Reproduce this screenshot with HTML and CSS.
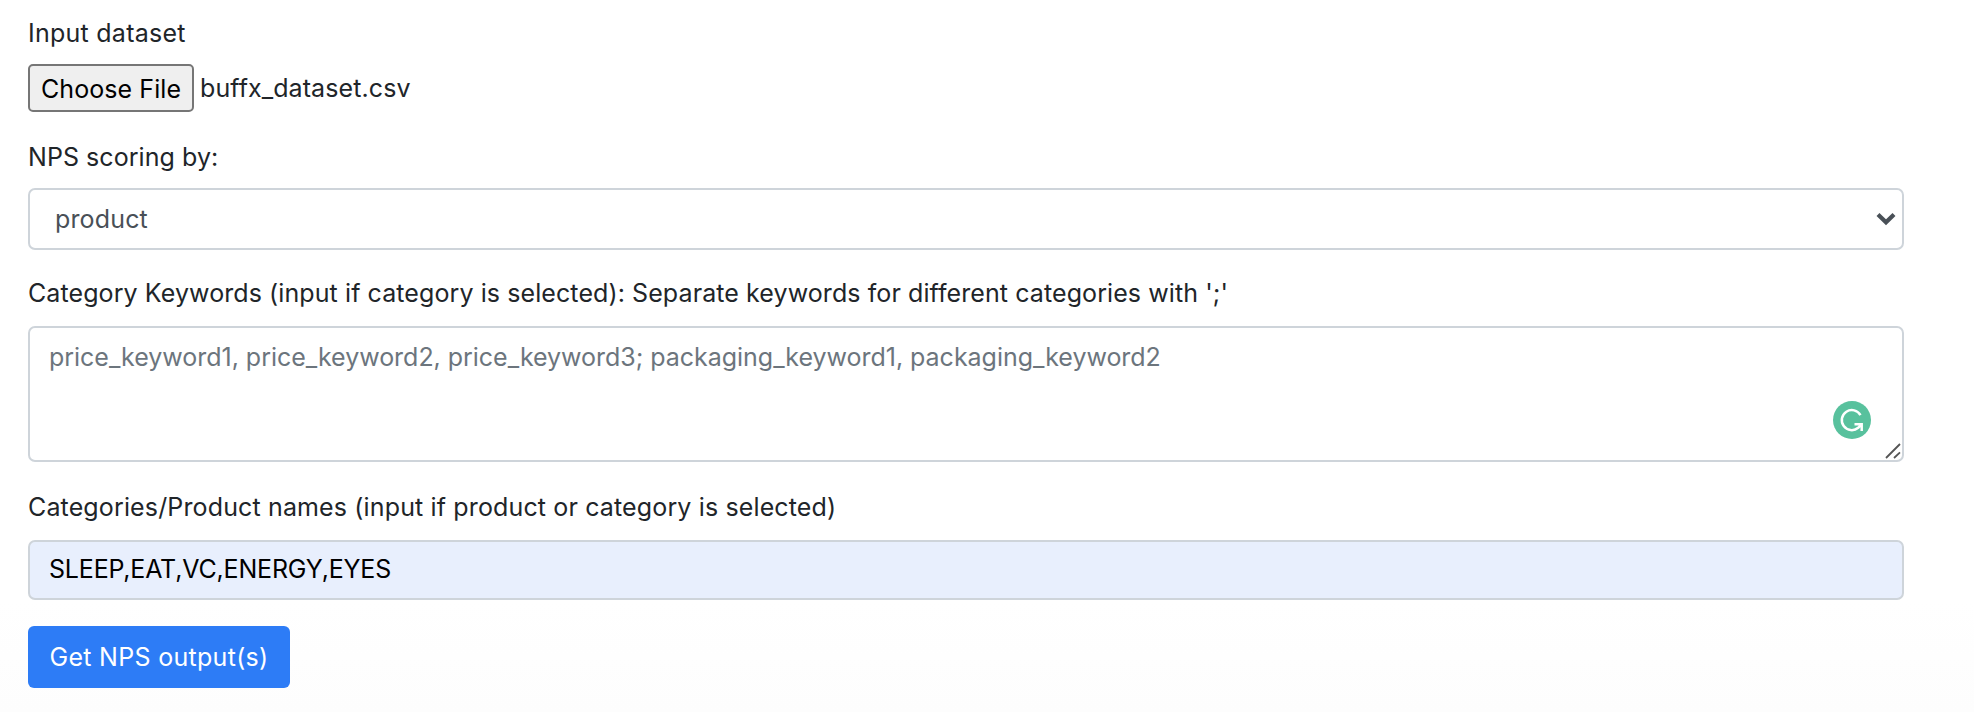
FILE: index.html
```html
<!DOCTYPE html>
<html lang="en">
<head>
<meta charset="utf-8">
<title>NPS scoring</title>
<link rel="stylesheet" href="styles.css">
</head>
<body>
<form class="form">
  <div class="group group-file">
    <label class="label label-dataset">Input dataset</label>
    <div class="file">
      <button type="button" class="file-button">Choose File</button>
      <span class="file-name">buffx_dataset.csv</span>
    </div>
  </div>
  <div class="group group-scoring">
    <label class="label label-scoring">NPS scoring by:</label>
    <div class="control select">
      <span class="select-value">product</span>
      <svg class="chevron" width="20" height="14" viewBox="0 0 20 14"><path d="M2 2.500 10 10.300 18 2.500" fill="none" stroke="#495057" stroke-width="4.200"/></svg>
    </div>
  </div>
  <div class="group group-keywords">
    <label class="label label-keywords">Category Keywords (input if category is selected): Separate keywords for different categories with ';'</label>
    <div class="control textarea">
      <span class="placeholder">price_keyword1, price_keyword2, price_keyword3; packaging_keyword1, packaging_keyword2</span>
      <svg class="badge" width="38" height="38" viewBox="0 0 38 38">
        <circle cx="19" cy="19" r="19" fill="#58c19d"/>
        <path d="M27.500 14.200A10 10 0 1 0 25.200 26.800L28.400 23.500M21.500 23.300H28.700V30" fill="none" stroke="#fff" stroke-width="2.500"/>
      </svg>
      <svg class="resizer" width="16" height="16" viewBox="0 0 16 16"><path d="M1 15 15 1M9 15 15 9.300" fill="none" stroke="#555" stroke-width="1.800"/></svg>
    </div>
  </div>
  <div class="group group-names">
    <label class="label label-names">Categories/Product names (input if product or category is selected)</label>
    <div class="control text-input"><span>SLEEP,EAT,VC,ENERGY,EYES</span></div>
  </div>
  <button type="button" class="submit">Get NPS output(s)</button>
</form>
</body>
</html>
```

FILE: styles.css
```css
* { box-sizing: border-box; }
body {
  margin: 0;
  min-height: 712px;
  background: linear-gradient(#fff 0, #fff 600px, #fdfdfd 712px);
  color: #212529;
  font: 25px/36px Inter, "Liberation Sans", sans-serif;
  white-space: nowrap;
}
button { font: inherit; white-space: nowrap; }
.form {
  display: flex;
  flex-direction: column;
  align-items: flex-start;
  width: 1904px;
  padding: 15px 0 0 28px;
}
.group { display: flex; flex-direction: column; width: 100%; }
.group-file { gap: 13px; margin-bottom: 27px; }
.group-scoring { gap: 13px; margin-bottom: 25px; }
.group-keywords { gap: 15px; margin-bottom: 27px; }
.group-names { gap: 15px; margin-bottom: 26px; }
.label-dataset { letter-spacing: 0.25px; }
.label-scoring { letter-spacing: 0.06px; }
.label-keywords { letter-spacing: 0.09px; }
.label-names { letter-spacing: 0.14px; }
.file { display: flex; align-items: center; gap: 6px; height: 48px; }
.file-button {
  width: 166px;
  height: 48px;
  padding: 2px 0 0;
  border: 2px solid #767676;
  border-radius: 5px;
  background: #efefef;
  color: #000;
  letter-spacing: 0.08px;
}
.file-name { letter-spacing: 0.09px; }
.control {
  display: flex;
  border: 2px solid #ced4da;
  border-radius: 7px;
  background: #fff;
}
.select {
  align-items: center;
  justify-content: space-between;
  height: 62px;
  padding: 0 6px 0 25px;
  color: #495057;
  letter-spacing: 0.15px;
}
.textarea {
  position: relative;
  height: 136px;
  padding: 11px 19px;
  color: #6c757d;
  letter-spacing: -0.026px;
}
.badge { position: absolute; right: 31px; bottom: 21px; }
.resizer { position: absolute; right: 1px; bottom: 1px; }
.text-input {
  align-items: center;
  height: 60px;
  padding: 0 19px 2px;
  background: #e8effd;
  color: #000;
  letter-spacing: -0.18px;
}
.submit {
  width: 262px;
  height: 62px;
  padding: 0;
  border: 0;
  border-radius: 6px;
  background: #2d7cf6;
  color: #fff;
  letter-spacing: 0.3px;
}
```
